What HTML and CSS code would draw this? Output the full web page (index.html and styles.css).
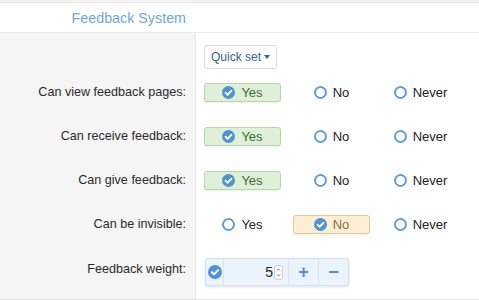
FILE: index.html
```html
<!DOCTYPE html>
<html>
<head>
<meta charset="utf-8">
<link rel="stylesheet" href="styles.css">
</head>
<body>
<div class="panel">
  <div class="row header">
    <div class="label title">Feedback System</div>
    <div class="field"></div>
  </div>
  <div class="row quick">
    <div class="label"></div>
    <div class="field">
      <button class="btn">Quick set <span class="caret"></span></button>
    </div>
  </div>
  <div class="row opt">
    <div class="label">Can view feedback pages:</div>
    <div class="field choices">
      <span class="choice on yes"><svg class="chk" viewBox="0 0 14 14"><circle cx="7" cy="7" r="7"/><path d="M3.8 7.2l2.2 2.2 4.2-4.3"/></svg>Yes</span>
      <span class="choice"><i class="radio"></i>No</span>
      <span class="choice"><i class="radio"></i>Never</span>
    </div>
  </div>
  <div class="row opt">
    <div class="label">Can receive feedback:</div>
    <div class="field choices">
      <span class="choice on yes"><svg class="chk" viewBox="0 0 14 14"><circle cx="7" cy="7" r="7"/><path d="M3.8 7.2l2.2 2.2 4.2-4.3"/></svg>Yes</span>
      <span class="choice"><i class="radio"></i>No</span>
      <span class="choice"><i class="radio"></i>Never</span>
    </div>
  </div>
  <div class="row opt">
    <div class="label">Can give feedback:</div>
    <div class="field choices">
      <span class="choice on yes"><svg class="chk" viewBox="0 0 14 14"><circle cx="7" cy="7" r="7"/><path d="M3.8 7.2l2.2 2.2 4.2-4.3"/></svg>Yes</span>
      <span class="choice"><i class="radio"></i>No</span>
      <span class="choice"><i class="radio"></i>Never</span>
    </div>
  </div>
  <div class="row opt">
    <div class="label">Can be invisible:</div>
    <div class="field choices">
      <span class="choice"><i class="radio"></i>Yes</span>
      <span class="choice on no"><svg class="chk" viewBox="0 0 14 14"><circle cx="7" cy="7" r="7"/><path d="M3.8 7.2l2.2 2.2 4.2-4.3"/></svg>No</span>
      <span class="choice"><i class="radio"></i>Never</span>
    </div>
  </div>
  <div class="row weight">
    <div class="label">Feedback weight:</div>
    <div class="field">
      <div class="group">
        <span class="gicon"><svg class="chk" viewBox="0 0 14 14"><circle cx="7" cy="7" r="7"/><path d="M3.8 7.2l2.2 2.2 4.2-4.3"/></svg></span>
        <span class="num">5<span class="spin"><svg viewBox="0 0 8 14"><path d="M2 5l2-2.2 2 2.2M2 9l2 2.2 2-2.2"/></svg></span></span>
        <span class="gbtn">+</span>
        <span class="gbtn minus">&minus;</span>
      </div>
    </div>
  </div>
</div>
</body>
</html>
```
FILE: styles.css
```css
html, body {
  margin: 0;
  padding: 0;
  background: #f3f3f3;
}
body {
  font-family: "Liberation Sans", Arial, sans-serif;
  font-size: 13px;
  color: #333;
  width: 479px;
  height: 300px;
  overflow: hidden;
}
.panel {
  margin-top: 2px;
  border-top: 1px solid #e6e6e6;
  border-bottom: 1px solid #e2e2e2;
  background: #fff;
}
.row {
  display: flex;
}
.label {
  width: 186px;
  flex: none;
  padding-right: 9px;
  border-right: 1px solid #e8e8e8;
  background: #f5f5f5;
  text-align: right;
  display: flex;
  align-items: center;
  justify-content: flex-end;
  font-size: 12.6px;
  color: #2b2b2b;
}
.field {
  flex: 1;
  padding-left: 8px;
  display: flex;
  align-items: center;
  background: #fff;
}
.header {
  height: 29px;
  border-bottom: 1px solid #ebebeb;
}
.header .label {
  background: #fff;
  border-right-color: #fff;
}
.label.title {
  font-size: 14.3px;
  color: #6ea6dc;
}
.quick {
  height: 37px;
}
.quick .field {
  align-items: flex-start;
  padding-top: 12px;
  box-sizing: border-box;
}
.btn {
  height: 24px;
  width: 73px;
  padding: 0;
  border: 1px solid #dcdcdc;
  border-radius: 3px;
  background: #fff;
  font-family: "Liberation Sans", Arial, sans-serif;
  font-size: 12px;
  color: #35628f;
  display: flex;
  align-items: center;
  justify-content: center;
  gap: 3px;
}
.caret {
  width: 0;
  height: 0;
  border-left: 3px solid transparent;
  border-right: 3px solid transparent;
  border-top: 4px solid #35628f;
}
.opt {
  height: 44px;
}
.choices {
  gap: 12px;
}
.choice {
  width: 77px;
  height: 19px;
  box-sizing: border-box;
  display: flex;
  align-items: center;
  justify-content: center;
  gap: 6px;
  font-size: 13px;
  color: #222;
  border: 1px solid transparent;
  border-radius: 3px;
}
.choice.yes {
  background: #dff0d8;
  border-color: #b3d9a5;
  color: #3d6e34;
  box-shadow: 0 1px 1px rgba(0,0,0,0.06);
}
.choice.no {
  background: #fcefd5;
  border-color: #e9c78d;
  color: #8a6d3b;
  box-shadow: 0 1px 1px rgba(0,0,0,0.06);
}
.chk {
  width: 13px;
  height: 13px;
  flex: none;
}
.chk circle {
  fill: #4e93d5;
}
.chk path {
  fill: none;
  stroke: #fff;
  stroke-width: 2;
  stroke-linecap: round;
  stroke-linejoin: round;
}
.radio {
  width: 9px;
  height: 9px;
  border: 2px solid #5d9fdb;
  border-radius: 50%;
  background: #fff;
  flex: none;
}
.weight {
  height: 53px;
}
.weight .label {
  align-items: flex-start;
  padding-top: 15px;
  box-sizing: content-box;
  height: 38px;
  line-height: 16px;
}
.weight .field {
  align-items: flex-start;
  padding-left: 9px;
  padding-top: 12px;
}
.group {
  display: flex;
  height: 26px;
  border: 1px solid #cfe0f0;
  border-radius: 3px;
  background: #ebf4fd;
  box-shadow: 0 1px 3px rgba(0,0,0,0.12);
}
.gicon {
  width: 17px;
  display: flex;
  align-items: center;
  justify-content: center;
  border-right: 1px solid #d9e6f2;
}
.gicon .chk {
  width: 14px;
  height: 14px;
}
.num {
  width: 65px;
  display: flex;
  align-items: center;
  justify-content: flex-end;
  padding-right: 5px;
  box-sizing: border-box;
  font-size: 14px;
  color: #222;
  border-right: 1px solid #d9e6f2;
}
.spin {
  width: 7px;
  height: 13px;
  margin-left: 1px;
  border: 1px solid #cfcfcf;
  border-radius: 3px;
  background: #fff;
  display: flex;
}
.spin svg {
  width: 7px;
  height: 13px;
}
.spin path {
  fill: none;
  stroke: #666;
  stroke-width: 0.9;
}
.gbtn {
  width: 29px;
  display: flex;
  align-items: center;
  justify-content: center;
  font-size: 18px;
  font-weight: bold;
  color: #4a90d6;
  border-right: 1px solid #d9e6f2;
}
.gbtn.minus {
  border-right: none;
}
```
